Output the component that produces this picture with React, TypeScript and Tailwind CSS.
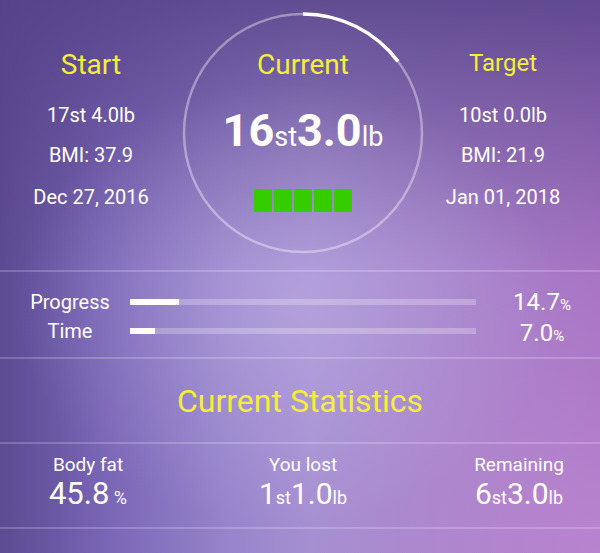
import React from "react";

const Y = "text-[#f4ee3a]";

function Big({ a, b, c, d }: { a: string; b: string; c: string; d: string }) {
  return (
    <div className="flex items-baseline justify-center text-white leading-[34px]">
      <span className="text-[30px]">{a}</span>
      <span className="text-[18px]">{b}</span>
      <span className="text-[30px]">{c}</span>
      <span className="text-[18px]">{d}</span>
    </div>
  );
}

export default function App() {
  return (
    <div className="w-[600px] h-[553px] overflow-hidden font-['Roboto','Noto_Sans',sans-serif] text-white [background:radial-gradient(circle_at_100%_100%,rgba(205,150,220,0.45),transparent_35%),radial-gradient(ellipse_45%_40%_at_48%_55%,rgba(200,185,235,0.4),transparent),linear-gradient(180deg,rgba(85,65,135,0.85)_0%,rgba(85,65,135,0.4)_25%,transparent_50%),linear-gradient(90deg,#5c4a92_0%,#7a66b6_18%,#9784cb_38%,#a690d2_52%,#a684cb_72%,#a874c4_100%)]">
      {/* top section */}
      <div className="flex h-[270px]">
        <div className="w-[182px] flex flex-col items-center pt-[48px]">
          <div className={`text-[28px] leading-[34px] ${Y}`}>Start</div>
          <div className="mt-[19px] text-[20px] leading-[28px]">17st 4.0lb</div>
          <div className="mt-[12px] text-[20px] leading-[28px]">BMI: 37.9</div>
          <div className="mt-[14px] text-[20px] leading-[28px]">Dec 27, 2016</div>
        </div>
        <div className="relative w-[242px] flex flex-col items-center pt-[48px]">
          <svg className="absolute left-0 top-[12px]" width="242" height="242" viewBox="0 0 242 242">
            <circle cx="121" cy="121" r="119" fill="none" stroke="rgba(255,255,255,0.38)" strokeWidth="2.5" />
            <path d="M121 2 A119 119 0 0 1 216 49.4" fill="none" stroke="#ffffff" strokeWidth="3.5" />
          </svg>
          <div className={`relative text-[28px] leading-[34px] ${Y}`}>Current</div>
          <div className="relative mt-[23px] flex items-baseline leading-[52px]">
            <span className="text-[45px] font-bold">16</span>
            <span className="text-[27px]">st</span>
            <span className="text-[45px] font-bold">3.0</span>
            <span className="text-[27px]">lb</span>
          </div>
          <div className="relative mt-[26px] flex gap-[2px]">
            <div className="w-[18px] h-[23px] bg-[#35cc00]" />
            <div className="w-[18px] h-[23px] bg-[#35cc00]" />
            <div className="w-[18px] h-[23px] bg-[#35cc00]" />
            <div className="w-[18px] h-[23px] bg-[#35cc00]" />
            <div className="w-[18px] h-[23px] bg-[#35cc00]" />
          </div>
        </div>
        <div className="w-[158px] flex flex-col items-center pt-[46px]">
          <div className={`text-[24px] leading-[34px] ${Y}`}>Target</div>
          <div className="mt-[21px] text-[20px] leading-[28px]">10st 0.0lb</div>
          <div className="mt-[12px] text-[20px] leading-[28px]">BMI: 21.9</div>
          <div className="mt-[14px] text-[20px] leading-[28px]">Jan 01, 2018</div>
        </div>
      </div>
      <div className="h-[2px] bg-white/20" />

      {/* progress section */}
      <div className="h-[85px] pt-[15px] flex flex-col">
        <div className="flex items-center h-[29px]">
          <div className="w-[100px] ml-[20px] text-center text-[20px]">Progress</div>
          <div className="ml-[10px] w-[346px] h-[6px] bg-white/25 flex">
            <div className="w-[49px] h-full bg-white" />
          </div>
          <div className="ml-[8px] flex-1 flex items-baseline justify-center">
            <span className="text-[24px]">14.7</span>
            <span className="text-[15px]">%</span>
          </div>
        </div>
        <div className="flex items-center h-[29px]">
          <div className="w-[100px] ml-[20px] text-center text-[20px]">Time</div>
          <div className="ml-[10px] w-[346px] h-[6px] bg-white/25 flex">
            <div className="w-[25px] h-full bg-white" />
          </div>
          <div className="ml-[8px] flex-1 flex items-baseline justify-center pt-[4px]">
            <span className="text-[24px]">7.0</span>
            <span className="text-[15px]">%</span>
          </div>
        </div>
      </div>
      <div className="h-[2px] bg-white/20" />

      {/* header */}
      <div className="h-[83px] flex items-center justify-center">
        <div className={`text-[32px] ${Y}`}>Current Statistics</div>
      </div>
      <div className="h-[2px] bg-white/20" />

      {/* stats */}
      <div className="h-[83px] pt-[9px] flex">
        <div className="w-[176px] flex flex-col items-center">
          <div className="text-[19px] leading-[24px]">Body fat</div>
          <div className="flex items-baseline leading-[34px]">
            <span className="text-[31px]">45.8</span>
            <span className="text-[18px]">&nbsp;%</span>
          </div>
        </div>
        <div className="w-[254px] flex flex-col items-center">
          <div className="text-[19px] leading-[24px]">You lost</div>
          <Big a="1" b="st" c="1.0" d="lb" />
        </div>
        <div className="flex-1 pl-[8px] flex flex-col items-center">
          <div className="text-[19px] leading-[24px]">Remaining</div>
          <Big a="6" b="st" c="3.0" d="lb" />
        </div>
      </div>
      <div className="h-[2px] bg-white/20" />
    </div>
  );
}
